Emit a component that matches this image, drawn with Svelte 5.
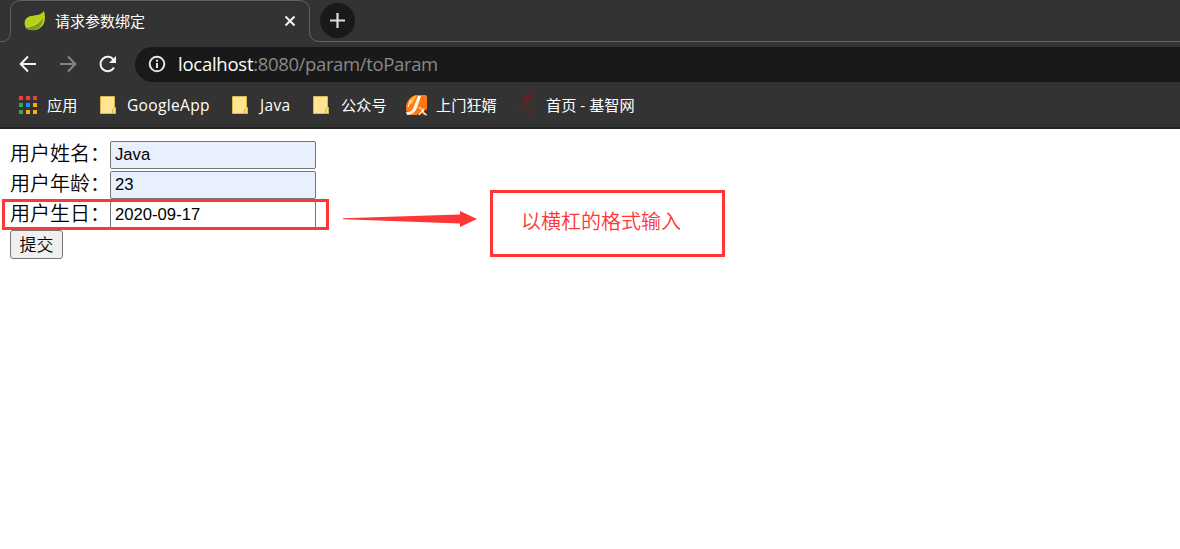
<script>
  const fields = [
    { label: '用户姓名：', value: 'Java', filled: true },
    { label: '用户年龄：', value: '23', filled: true },
    { label: '用户生日：', value: '2020-09-17', filled: false }
  ];
  const red = '#ea4335', green = '#34a853', blue = '#1a90ff', yellow = '#fbb003';
  const dots = [red, red, red, green, blue, yellow, green, yellow, yellow];
</script>

{#snippet folder()}
  <svg class="folder" width="17" height="20" viewBox="0 0 17 20">
    <path d="M.5 1.500h14v11h1v6H.5z" fill="#ffe591" stroke="#d8b84d" />
    <path d="M12.500 18.500v-4l2-2h1v6z" fill="#ffe06e" stroke="#d5b64c" />
  </svg>
{/snippet}

<div class="browser">
  <header>
    <div class="tabs">
      <svg class="outline" width="1180" height="43" viewBox="0 0 1180 43" fill="none" stroke="#626262">
        <path d="M0 41.500h2q8 0 8.500-9V11Q10.500.5 21 .5H299Q309.500.5 309.500 11V31Q309.500 41.500 320 41.500H1180" />
      </svg>
      <div class="tab">
        <svg class="leaf" width="22" height="22" viewBox="0 0 22 22">
          <path d="M20 1C22 8 21 15 16 18C12 21 5 21 2 18C-1 13 1 7 7 6C13 5 17 5 20 1Z" fill="#b5cf1b" />
          <path d="M2 18C9 17 16 14 19 8C19 15 14 20 8 20Q4 20 2 18Z" fill="#759c1e" />
          <path d="M3 17Q12 15 17 9" fill="none" stroke="#c8d934" />
        </svg>
        <span class="title">请求参数绑定</span>
        <svg class="close" width="12" height="12" viewBox="0 0 12 12"><path d="m1.500 1.500 9 9m0-9-9 9" stroke="#f5f5f5" stroke-width="2" /></svg>
      </div>
      <div class="add"><svg width="15" height="15" viewBox="0 0 15 15"><path d="M7.500 0v15M0 7.500h15" stroke="#ddd" stroke-width="2.200" /></svg></div>
    </div>
    <div class="toolbar">
      <svg class="nav" width="18" height="18" viewBox="0 0 18 18"><path d="M17 9H2M9 1.500 1.700 9 9 16.500" /></svg>
      <svg class="nav forward" width="18" height="18" viewBox="0 0 18 18"><path d="M1 9h15M9 1.500 16.300 9 9 16.500" /></svg>
      <svg class="nav reload" width="20" height="20" viewBox="0 0 20 20"><path d="M15.700 6A7.200 7.200 0 1 0 16 13.500" /><path d="M18 2V9H11Z" class="tip" /></svg>
      <div class="address">
        <svg width="18" height="18" viewBox="0 0 18 18" fill="none" stroke="#e5e5e5" stroke-width="2"><circle cx="9" cy="9" r="7.300" /><path d="M9 8v5M9 4.800v2" /></svg>
        <span class="url"><b>localhost</b>:8080/param/toParam</span>
      </div>
    </div>
    <nav>
      <div class="apps">{#each dots as color}<i style="background:{color}"></i>{/each}</div>
      <span class="apps-label cjk">应用</span>
      {@render folder()}<span class="google">GoogleApp</span>
      {@render folder()}<span class="java">Java</span>
      {@render folder()}<span class="public cjk">公众号</span>
      <svg class="orange" width="21" height="21" viewBox="0 0 21 21">
        <path d="M0 13C0 6 5 0 12 0H20L21 2V14L18 16L20 21L15 18L11 20H3Q0 18 0 13Z" fill="#ff7812" />
        <path d="M2 9Q4 2 11 0L6 9Z" fill="#ffb52e" />
        <path d="M12 1H15L11 13Q8 20 1 20L0 17Q6 18 8 11Z" fill="#fff4e8" />
        <path d="M5 5 2 12" fill="none" stroke="#fff4e8" stroke-width="1.200" />
        <path d="M13 13Q15 12 16 15Q18 19 21 20M18 14 13 20" fill="none" stroke="#fff4e8" stroke-width="1.200" />
      </svg>
      <span class="shangmen cjk">上门狂婿</span>
      <svg class="figure" width="18" height="22" viewBox="0 0 18 22" fill="none" stroke="#751c20" stroke-width="1.200"><path d="M16 1Q10 0 6 4Q5 6 8 9Q9 13 0 16M16 2Q10 2 9 5Q8 7 13 10Q19 14 10 20M6 5Q11 5 15 2" /></svg>
      <span class="cjk">首页 - 基智网</span>
    </nav>
  </header>

  <main>
    <form>
      {#each fields as field}
        <label><span>{field.label}</span><input type="text" value={field.value} class:filled={field.filled} /></label>
      {/each}
      <button type="button">提交</button>
    </form>
    <div class="highlight"></div>
    <svg class="arrow" width="136" height="18" viewBox="0 0 136 18"><path d="M1 8.200 118 4.500V1L135 9 118 17V13.500L1 9.200Z" fill="#ff3636" /></svg>
    <div class="note">以横杠的格式输入</div>
  </main>
</div>

<style>
  :global(body) { margin: 0; background: #fff; }
  .browser { width: 1180px; height: 549px; overflow: hidden; position: relative; background: #fff; font-family: "Open Sans", "Noto Sans CJK SC", sans-serif; }
  header { height: 127px; background: #333; border-bottom: 2px solid #232323; color: #fff; }
  svg { display: block; flex: none; }
  .tabs { height: 42px; display: flex; position: relative; }
  .outline { position: absolute; left: 0; top: 0; }
  .tab { width: 310px; height: 42px; box-sizing: border-box; padding-left: 24px; display: flex; align-items: center; }
  .title { font: 15px/22px "Noto Sans CJK SC", sans-serif; margin-left: 9px; width: 229px; }
  .add { width: 35px; height: 35px; margin: 3px 0 0 10px; border-radius: 50%; background: #191919; display: grid; place-items: center; }
  .toolbar { height: 44px; display: flex; align-items: center; padding-left: 19px; }
  .nav { fill: none; stroke: #f4f4f4; stroke-width: 2; margin-right: 22px; }
  .nav.forward { stroke: #858585; margin-right: 21px; }
  .nav.reload { margin-right: 17px; }
  .nav .tip { fill: #f4f4f4; stroke: none; }
  .address { height: 35px; flex: 1; border-radius: 18px 0 0 18px; background: #191919; display: flex; align-items: center; padding-left: 13px; }
  .url { font-size: 18.5px; line-height: 28px; color: #898989; margin-left: 12px; letter-spacing: -.36px; }
  .url b { font-weight: 400; color: #fff; letter-spacing: -.25px; }
  nav { height: 38px; display: flex; align-items: center; padding-left: 19px; font-size: 15.5px; white-space: nowrap; }
  .cjk { font-size: 15.2px; line-height: 20px; padding-bottom: 1px; }
  .apps { width: 18px; display: grid; grid-template-columns: repeat(3, 4px); gap: 3px; }
  .apps i { height: 4px; }
  .apps-label { margin-left: 10px; width: 53px; }
  .folder { margin-right: 10px; }
  .google { width: 105px; letter-spacing: .35px; }
  .java { width: 53px; margin-left: 1px; letter-spacing: .35px; }
  .public { width: 65px; margin-left: 1px; }
  .shangmen { width: 82px; margin-left: 9px; }
  .figure { margin-right: 10px; }
  main { position: relative; }
  form { padding: 11px 0 0 10px; }
  label { height: 30px; display: flex; align-items: center; }
  label span { width: 100px; padding-bottom: 4px; font: 350 20px/26px "Noto Sans CJK SC", sans-serif; white-space: nowrap; }
  input { width: 206px; height: 28px; box-sizing: border-box; border: 1px solid #767676; border-radius: 2px; padding: 0 4px; font: 16.67px "Liberation Sans", sans-serif; color: #000; background: #fff; }
  input.filled { background: #e8f0fe; }
  button { display: block; width: 53px; height: 29px; border: 1px solid #767676; border-radius: 3px; padding: 0 0 2px; background: #efefef; color: #000; font: 350 17px/25px "Noto Sans CJK SC", sans-serif; }
  .highlight { position: absolute; box-sizing: border-box; left: 2px; top: 70px; width: 327px; height: 31px; border: 3px solid #ff3636; }
  .arrow { position: absolute; left: 342px; top: 81px; }
  .note { position: absolute; box-sizing: border-box; left: 490px; top: 61px; width: 235px; height: 67px; border: 3px solid #ff3636; padding: 13px 28px; color: #ff3636; font: 350 20px/29px "Noto Sans CJK SC", sans-serif; }
</style>
